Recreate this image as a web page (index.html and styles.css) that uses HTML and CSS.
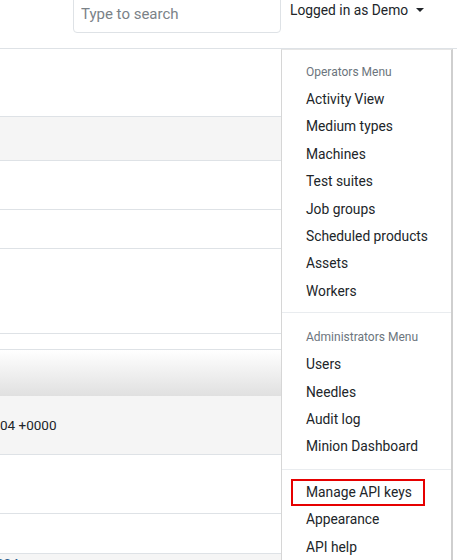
FILE: index.html
```html
<!DOCTYPE html>
<html>
<head>
<meta charset="utf-8">
<link rel="stylesheet" href="styles.css">
</head>
<body>
<header class="navbar">
  <input class="search" type="text" placeholder="Type to search">
  <div class="user">Logged in as Demo <span class="caret"></span></div>
</header>
<main class="content">
  <div class="row r1"></div>
  <div class="row r2 gray"></div>
  <div class="row r3"></div>
  <div class="row r4"></div>
  <div class="row r5"></div>
  <div class="row r6"></div>
  <div class="row r7 grad"></div>
  <div class="row r8 gray"><span class="cell">04 +0000</span></div>
  <div class="row r9"></div>
  <div class="row r10"></div>
  <div class="row r11 gray"><span class="cell link">004</span></div>
</main>
<nav class="dropdown">
  <div class="dd-header">Operators Menu</div>
  <a class="dd-item">Activity View</a>
  <a class="dd-item">Medium types</a>
  <a class="dd-item">Machines</a>
  <a class="dd-item">Test suites</a>
  <a class="dd-item">Job groups</a>
  <a class="dd-item">Scheduled products</a>
  <a class="dd-item">Assets</a>
  <a class="dd-item">Workers</a>
  <div class="dd-divider"></div>
  <div class="dd-header">Administrators Menu</div>
  <a class="dd-item">Users</a>
  <a class="dd-item">Needles</a>
  <a class="dd-item">Audit log</a>
  <a class="dd-item">Minion Dashboard</a>
  <div class="dd-divider second"></div>
  <a class="dd-item highlighted">Manage API keys</a>
  <a class="dd-item">Appearance</a>
  <a class="dd-item">API help</a>
</nav>
</body>
</html>
```
FILE: styles.css
```css
html, body {
  margin: 0;
  padding: 0;
  background: #fff;
  overflow: hidden;
}
body {
  font-family: Roboto, "Liberation Sans", sans-serif;
  font-size: 14px;
  color: #212529;
  width: 457px;
  height: 560px;
  position: relative;
}
.navbar {
  height: 48px;
  border-bottom: 1px solid #dee2e6;
  display: flex;
  align-items: flex-start;
}
.search {
  margin-left: 73px;
  margin-top: -6px;
  width: 208px;
  height: 39px;
  box-sizing: border-box;
  border: 1px solid #dee2e6;
  border-radius: 4px;
  padding: 0 7px;
  font-family: Roboto, "Liberation Sans", sans-serif;
  font-size: 15px;
  color: #495057;
  outline: none;
}
.search::placeholder {
  color: #7a8288;
}
.user {
  margin-left: 9px;
  margin-top: 1px;
  line-height: 18px;
  font-size: 13.8px;
  color: #212529;
  display: flex;
  align-items: center;
}
.caret {
  display: inline-block;
  margin-left: 8px;
  width: 0;
  height: 0;
  border-left: 4px solid transparent;
  border-right: 4px solid transparent;
  border-top: 4px solid #212529;
}
.content {
  width: 282px;
  display: flex;
  flex-direction: column;
}
.row {
  border-bottom: 1px solid #dee2e6;
  box-sizing: border-box;
  display: flex;
  align-items: center;
}
.gray { background: #f5f5f5; }
.grad {
  background: linear-gradient(#ffffff, #e0e0e0);
  border-bottom: none;
}
.r1 { height: 68px; }
.r2 { height: 44px; }
.r3 { height: 49px; }
.r4 { height: 39px; }
.r5 { height: 85px; }
.r6 { height: 16px; }
.r7 { height: 46px; }
.r8 { height: 59px; }
.r9 { height: 59px; }
.r10 { height: 40px; }
.r11 { height: 30px; border-bottom: none; align-items: flex-start; }
.cell {
  font-size: 13.5px;
  color: #212529;
  padding-bottom: 1px;
}
.link {
  color: #2a5d8f;
  padding-bottom: 0;
  margin-top: 1px;
  margin-left: -4px;
}
.dropdown {
  position: absolute;
  left: 281px;
  top: 49px;
  width: 172px;
  height: 530px;
  box-sizing: border-box;
  background: #fff;
  border-left: 1px solid #d6d6d6;
  border-right: 2px solid #cfcfcf;
  border-top: 1px solid #e6e6e6;
  padding: 5px 0;
  display: flex;
  flex-direction: column;
}
.dd-header {
  padding: 8px 24px 5px;
  font-size: 12px;
  line-height: 18px;
  color: #6c757d;
}
.dd-item {
  display: block;
  padding: 4px 24px;
  line-height: 19.4px;
  font-size: 13.8px;
  color: #212529;
  white-space: nowrap;
}
.dd-divider {
  height: 0;
  border-top: 1px solid #e9ecef;
  margin: 7px 0;
}
.dd-divider.second {
  margin: 8px 0 9px;
}
.highlighted {
  margin: 0 26px 0 9px;
  padding: 2px 13px;
  border: 2px solid #e60000;
}
```
